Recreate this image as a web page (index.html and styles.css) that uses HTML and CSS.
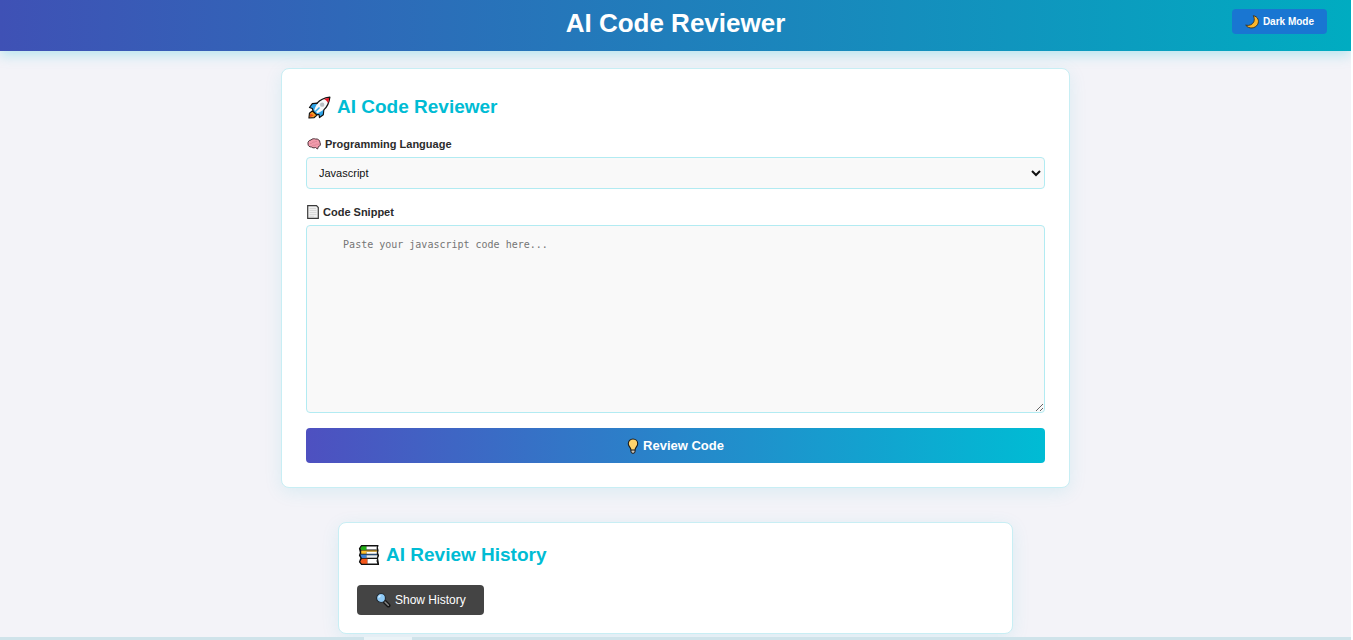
FILE: index.html
```html
<!DOCTYPE html>
<html lang="en">
<head>
<meta charset="utf-8">
<title>AI Code Reviewer</title>
<link rel="stylesheet" href="styles.css">
</head>
<body>
<header class="topbar">
  <h1 class="topbar-title">AI Code Reviewer</h1>
  <button class="theme-toggle" type="button">
    <svg class="icon-moon" viewBox="0 0 14 14" aria-hidden="true"><path d="M8.300 .7C13 1.500 14.500 6 12.700 9.300C10.300 13.700 4 14.300 .7 10.200C4.500 11 7.500 9.500 8.800 6.800C9.600 4.800 9.300 2.500 8.300 .7Z" fill="#fdb62b" stroke="#38301f" stroke-width=".9"/></svg>
    Dark Mode
  </button>
</header>
<main class="content">
  <form class="card review-card">
    <h2 class="card-title review-title">
      <svg class="icon-rocket" viewBox="0 0 24 24" aria-hidden="true">
        <path d="M4.500 15.500L1.500 18L1 23L6.500 22.500L9.500 20Z" fill="#f79a22" stroke="#111" stroke-width="1.200" stroke-linejoin="round"/>
        <path d="M1.800 22.200L2.500 18.500L6 20Z" fill="#e8481c"/>
        <path d="M9.500 7.500L4.500 8L1.500 12L4.500 13L5.500 16L8.500 19L11.500 19.500L12 22.500L16 19.500L16.500 14.500Z" fill="#2ea3e6" stroke="#111" stroke-width="1.200" stroke-linejoin="round"/>
        <path d="M6.500 14.500C8.500 8 13 3 22.800 1.200C22 10.500 16 15.500 9.800 18Z" fill="#f7f9fa"/>
        <path d="M9.500 7.500C12.500 3.800 16.500 2 22.800 1.200C22 7.500 20 11.500 16.500 14.500" fill="none" stroke="#111" stroke-width="1.300" stroke-linejoin="round"/>
        <path d="M16.500 3L22.200 1.800L21 7.500C20.300 5.500 18.500 3.800 16.500 3Z" fill="#e81525"/>
        <circle cx="14.800" cy="9" r="2.300" fill="#b9bec3"/>
        <path d="M7.500 16.500L12 12" stroke="#35aeea" stroke-width="1.500"/>
      </svg>
      AI Code Reviewer
    </h2>
    <div class="field">
      <label class="field-label" for="language">
        <svg class="icon-brain" viewBox="0 0 14 12" aria-hidden="true">
          <path d="M1 6C.5 3.500 2.500 2 4 2C5 .5 7.500 .5 8.500 1C11 .5 13 2.500 13 4.500C14 6.500 13 8.500 11.500 8.500L10.500 11L8.500 9.500C6.500 10.300 5 9.500 4.500 9C2.500 9 1 8 1 6Z" fill="#f29bab" stroke="#4c343b" stroke-width="1"/>
          <path d="M3 5.500C5 6.500 5 3.500 7 4C8 4.300 8.500 3 10 3.500M5 8C6.500 6.500 8 8 9 6.500C10 5.500 11 7 12 6" fill="none" stroke="#d57f91" stroke-width=".7"/>
        </svg>
        Programming Language
      </label>
      <select class="control select" id="language">
        <option>Javascript</option>
        <option>Python</option>
        <option>Java</option>
      </select>
    </div>
    <div class="field">
      <label class="field-label" for="snippet">
        <svg class="icon-page" viewBox="0 0 12 14" aria-hidden="true"><path d="M.7 .7H9.500L11.300 2.500V13.300H.7Z" fill="#f0f0f0" stroke="#3a3a3a" stroke-width="1.200"/><path d="M2.500 3.500H9M2.500 5.500H9.500M2.500 7.500H9.500M2.500 9.500H9.500M2.500 11.300H7" stroke="#d3d3d3" stroke-width=".8"/></svg>
        Code Snippet
      </label>
      <textarea class="control snippet" id="snippet" placeholder="    Paste your javascript code here..."></textarea>
    </div>
    <button class="review-button" type="button">
      <svg class="icon-bulb" viewBox="0 0 12 16" aria-hidden="true"><path d="M4 11.500H8V14L7.200 15.200H4.800L4 14Z" fill="#c9c5bb" stroke="#1d1d1d" stroke-width="1"/><path d="M6 1C8.800 1 10.700 3.200 10.700 5.700C10.700 8.500 8.300 9 8 12H4C3.700 9 1.300 8.500 1.300 5.700C1.300 3.200 3.200 1 6 1Z" fill="#ffd36c" stroke="#1d1d1d" stroke-width="1.100"/></svg>
      Review Code
    </button>
  </form>
  <section class="card history-card">
    <h2 class="card-title history-title">
      <svg class="icon-books" viewBox="0 0 22 22" aria-hidden="true">
        <path d="M3.500 1.500H20L19.200 3.500L20 6.500L19.500 9L20.500 11.500L19.500 14L20.500 20.500H3.500L1.500 18L3 14L1.500 11.500L2.500 8.500L1.500 4.500Z" fill="#111" stroke="#111" stroke-width="1.200" stroke-linejoin="round"/>
        <path d="M3.800 2.200H8.500V6H3.200L2.300 4.500Z" fill="#22ae18"/>
        <path d="M8.500 2.500H19L18.500 4L19 5.500H8.500Z" fill="#fff"/>
        <path d="M3.200 6.600H19V7.800H8.500V9.800H3.200Z" fill="#ffc02e"/>
        <path d="M8.500 7.800H18.800V9.800H8.500Z" fill="#fff"/>
        <path d="M2.300 10.500H19V11.300H8.500V14H3.800Z" fill="#3e83d8"/>
        <path d="M8.500 11.300H19.500L18.800 13.800H8.500Z" fill="#e8eef3"/>
        <path d="M3.800 14.700H9.500V19.800H3.800L2.300 17.800Z" fill="#f4571b"/>
        <path d="M9.500 15H19L18.500 17L19.300 19.500H9.500Z" fill="#fff"/>
      </svg>
      AI Review History
    </h2>
    <button class="history-button" type="button">
      <svg class="icon-search" viewBox="0 0 16 16" aria-hidden="true"><path d="M9 9L13.500 13.500" stroke="#171717" stroke-width="4" stroke-linecap="round"/><path d="M10 10L13.300 13.300" stroke="#858585" stroke-width="1.500" stroke-linecap="round"/><circle cx="6" cy="6" r="4.500" fill="#8fcaf6" stroke="#252b31" stroke-width="1.200"/><path d="M3.500 5.500L5.500 3.500" stroke="#d5edff" stroke-width="1.200"/></svg>
      Show History
    </button>
  </section>
</main>
<div class="bottom-strip"><span class="bottom-strip-mark"></span></div>
</body>
</html>
```
FILE: styles.css
```css
* {
  box-sizing: border-box;
}

html {
  background: #fff;
}

body {
  display: flex;
  flex-direction: column;
  min-height: 100vh;
  margin: 0 2px 0 0;
  background: #f3f3f8;
  color: #2b2b2b;
  font-family: "Liberation Sans", Arial, sans-serif;
}

svg {
  flex: none;
}

button {
  display: flex;
  align-items: center;
  justify-content: center;
  gap: 4px;
  border: 0;
  border-radius: 4px;
  color: #fff;
  font-family: inherit;
}

.topbar {
  display: grid;
  grid-template-columns: 1fr auto 1fr;
  align-items: start;
  padding: 9px 24px 14px;
  background: linear-gradient(90deg, #3f51b5, #00acc1);
  box-shadow: 0 4px 12px rgba(0, 188, 212, 0.25);
}

.topbar-title {
  grid-column: 2;
  margin: 0;
  color: #fff;
  font-size: 26px;
  line-height: 28px;
}

.theme-toggle {
  justify-self: end;
  height: 25px;
  padding: 0 13px;
  background: #1976d2;
  font-size: 10px;
  font-weight: bold;
}

.content {
  display: flex;
  flex: 1;
  flex-direction: column;
  align-items: center;
  gap: 34px;
  padding: 17px 16px 3px;
}

.card {
  width: 100%;
  border: 1px solid #c8eef4;
  border-radius: 8px;
  background: #fff;
  box-shadow: 0 4px 18px rgba(0, 172, 193, 0.1);
}

.review-card {
  display: flex;
  flex-direction: column;
  gap: 15px;
  max-width: 789px;
  padding: 24px;
}

.history-card {
  max-width: 675px;
  padding: 18px;
}

.card-title {
  display: flex;
  align-items: center;
  gap: 6px;
  margin: 0;
  padding-left: 1px;
  color: #00bcd4;
  font-size: 19px;
  line-height: 28px;
}

.review-title {
  padding-left: 2px;
}

.history-title {
  margin-bottom: 16px;
}

.field {
  display: flex;
  flex-direction: column;
  gap: 5px;
}

.field-label {
  display: flex;
  align-items: center;
  gap: 4px;
  padding-left: 1px;
  font-size: 11px;
  font-weight: bold;
  line-height: 16px;
}

.control {
  width: 100%;
  border: 1px solid #b2ebf2;
  border-radius: 4px;
  background: #f9f9f9;
}

.select {
  height: 32px;
  padding: 0 0 0 8px;
  color: #111;
  font-family: inherit;
  font-size: 11px;
}

.snippet {
  display: block;
  height: 188px;
  padding: 12px;
  font-family: "DejaVu Sans Mono", monospace;
  font-size: 10px;
  line-height: 14px;
  resize: vertical;
}

.snippet::placeholder {
  color: #757575;
}

.review-button {
  height: 35px;
  background: linear-gradient(90deg, #4e50c0, #00bcd4);
  font-size: 13px;
  font-weight: bold;
}

.history-button {
  height: 30px;
  padding: 0 18px;
  background: #444;
  font-size: 12px;
}

.bottom-strip {
  height: 3px;
  padding-left: 364px;
  background: #cfe3ea;
}

.bottom-strip-mark {
  display: block;
  width: 48px;
  height: 3px;
  background: #eaf3f7;
}

.icon-moon {
  width: 14px;
  height: 14px;
}

.icon-rocket {
  width: 23px;
  height: 23px;
}

.icon-brain {
  width: 14px;
  height: 12px;
}

.icon-page {
  width: 12px;
  height: 14px;
}

.icon-bulb {
  width: 12px;
  height: 16px;
}

.icon-books {
  width: 22px;
  height: 22px;
}

.icon-search {
  width: 16px;
  height: 16px;
}
```
